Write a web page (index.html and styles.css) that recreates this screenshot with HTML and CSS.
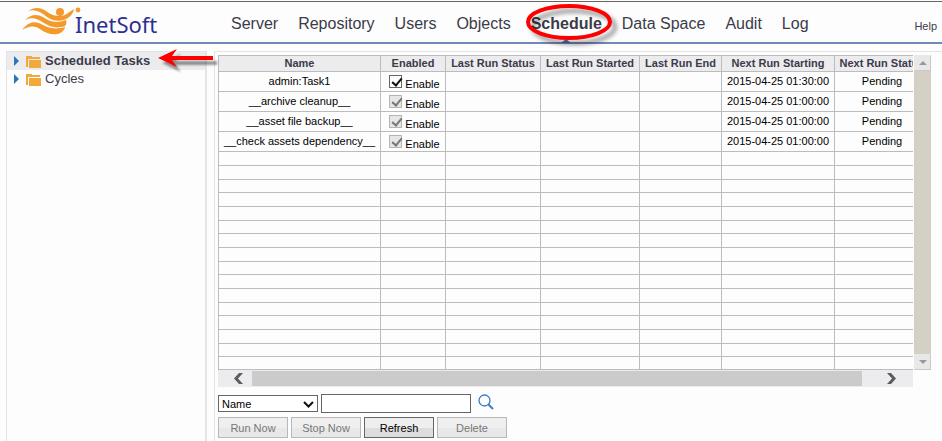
FILE: index.html
```html
<!DOCTYPE html>
<html lang="en">
<head>
<meta charset="utf-8">
<title>InetSoft - Schedule</title>
<link rel="stylesheet" href="styles.css">
</head>
<body>
<header class="top">
  <a class="logo" href="#">
    <svg class="logo-mark" width="60" height="32" viewBox="0 0 60 32" aria-hidden="true">
      <g fill="#f49a2c">
        <path d="M6 5C12 1 18 1 24 5C29 9 33 10 38 10C44 10 48 5 52 3C51 8 48 11 44 13C38 16 30 15 25 11C19 6 13 3 6 5Z"/>
        <path d="M3 14C9 8 15 8 21 11C27 15 33 18 44 14C45 17 44 19 43 20C35 23 28 21 22 17C15 12 9 11 3 14Z"/>
        <path d="M0 24C7 15 13 15 19 18C26 22 33 24 43 21C43 24 39 27 36 28C29 29 23 27 18 23C12 19 7 20 0 24Z"/>
        <circle cx="38" cy="6" r="4"/>
        <circle cx="56" cy="4" r="2.4"/>
      </g>
    </svg>
    <span class="logo-text">InetSoft</span>
  </a>
  <nav class="nav">
    <a href="#">Server</a>
    <a href="#">Repository</a>
    <a href="#">Users</a>
    <a href="#">Objects</a>
    <a href="#" class="active">Schedule
      <svg class="ring" width="96" height="50" viewBox="0 0 96 50" aria-hidden="true">
        <ellipse cx="44" cy="20" rx="41" ry="16" fill="none" stroke="#ff0000" stroke-width="4"/>
      </svg>
    </a>
    <a href="#">Data Space</a>
    <a href="#">Audit</a>
    <a href="#">Log</a>
  </nav>
  <a class="help" href="#">Help</a>
</header>
<div class="body">
  <aside class="side">
    <a class="node selected" href="#">
      <svg class="caret" width="6" height="10" viewBox="0 0 6 10"><path d="M0 0L5 5L0 10Z" fill="#2878b8"/></svg>
      <svg class="folder" width="16" height="13" viewBox="0 0 16 13"><path d="M0 1H6V2H14V4H2V12H0Z" fill="#f2a93b"/><path d="M3 5H15V13H3Z" fill="#f2a93b"/></svg>
      <span>Scheduled Tasks</span>
      <svg class="arrow" width="64" height="28" viewBox="0 0 64 28" aria-hidden="true"><path d="M1 11L20 2L15 9H56V13H15L20 20Z" fill="#ff0000"/></svg>
    </a>
    <a class="node" href="#">
      <svg class="caret" width="6" height="10" viewBox="0 0 6 10"><path d="M0 0L5 5L0 10Z" fill="#2878b8"/></svg>
      <svg class="folder" width="16" height="13" viewBox="0 0 16 13"><path d="M0 1H6V2H14V4H2V12H0Z" fill="#f2a93b"/><path d="M3 5H15V13H3Z" fill="#f2a93b"/></svg>
      <span>Cycles</span>
    </a>
  </aside>
  <main class="main">
    <div class="grid">
      <div class="clip">
        <table class="tasks">
          <colgroup><col class="c1"><col class="c2"><col class="c3"><col class="c4"><col class="c5"><col class="c6"><col class="c7"></colgroup>
          <thead>
            <tr><th>Name</th><th>Enabled</th><th>Last Run Status</th><th>Last Run Started</th><th>Last Run End</th><th>Next Run Starting</th><th>Next Run Status</th></tr>
          </thead>
          <tbody class="filled">
            <tr><td>admin:Task1</td><td><label class="tick"><input type="checkbox" checked><span>Enable</span></label></td><td></td><td></td><td></td><td>2015-04-25 01:30:00</td><td>Pending</td></tr>
            <tr><td>__archive cleanup__</td><td><label class="tick"><input type="checkbox" checked disabled><span>Enable</span></label></td><td></td><td></td><td></td><td>2015-04-25 01:00:00</td><td>Pending</td></tr>
            <tr><td>__asset file backup__</td><td><label class="tick"><input type="checkbox" checked disabled><span>Enable</span></label></td><td></td><td></td><td></td><td>2015-04-25 01:00:00</td><td>Pending</td></tr>
            <tr><td>__check assets dependency__</td><td><label class="tick"><input type="checkbox" checked disabled><span>Enable</span></label></td><td></td><td></td><td></td><td>2015-04-25 01:00:00</td><td>Pending</td></tr>
          </tbody>
          <tbody class="blank">
            <tr><td></td><td></td><td></td><td></td><td></td><td></td><td></td></tr>
            <tr><td></td><td></td><td></td><td></td><td></td><td></td><td></td></tr>
            <tr><td></td><td></td><td></td><td></td><td></td><td></td><td></td></tr>
            <tr><td></td><td></td><td></td><td></td><td></td><td></td><td></td></tr>
            <tr><td></td><td></td><td></td><td></td><td></td><td></td><td></td></tr>
            <tr><td></td><td></td><td></td><td></td><td></td><td></td><td></td></tr>
            <tr><td></td><td></td><td></td><td></td><td></td><td></td><td></td></tr>
            <tr><td></td><td></td><td></td><td></td><td></td><td></td><td></td></tr>
            <tr><td></td><td></td><td></td><td></td><td></td><td></td><td></td></tr>
            <tr><td></td><td></td><td></td><td></td><td></td><td></td><td></td></tr>
            <tr><td></td><td></td><td></td><td></td><td></td><td></td><td></td></tr>
            <tr><td></td><td></td><td></td><td></td><td></td><td></td><td></td></tr>
            <tr><td></td><td></td><td></td><td></td><td></td><td></td><td></td></tr>
            <tr><td></td><td></td><td></td><td></td><td></td><td></td><td></td></tr>
            <tr><td></td><td></td><td></td><td></td><td></td><td></td><td></td></tr>
            <tr><td></td><td></td><td></td><td></td><td></td><td></td><td></td></tr>
          </tbody>
        </table>
      </div>
      <div class="vbar">
        <button type="button" aria-label="Scroll up"><svg width="8" height="4" viewBox="0 0 8 4"><path d="M4 0L8 4H0Z" fill="#999"/></svg></button>
        <button type="button" aria-label="Scroll down"><svg width="8" height="4" viewBox="0 0 8 4"><path d="M0 0H8L4 4Z" fill="#999"/></svg></button>
      </div>
      <div class="hbar">
        <button type="button" aria-label="Scroll left"><svg width="10" height="11" viewBox="0 0 10 11"><path d="M5 0H9L4 5.5L9 11H5L0 5.5Z" fill="#5c5c5c"/></svg></button>
        <div class="thumb"></div>
        <button type="button" class="right" aria-label="Scroll right"><svg width="10" height="11" viewBox="0 0 10 11"><path d="M1 0H5L10 5.5L5 11H1L6 5.5Z" fill="#5c5c5c"/></svg></button>
      </div>
    </div>
    <form class="search">
      <div class="pick">
        <select aria-label="Search by"><option>Name</option></select>
        <svg width="11" height="7" viewBox="0 0 11 7" aria-hidden="true"><path d="M1 1L5.5 5.5L10 1" fill="none" stroke="#111" stroke-width="2"/></svg>
      </div>
      <input type="text" aria-label="Search text">
      <button type="button" class="find" aria-label="Search"><svg width="16" height="16" viewBox="0 0 16 16"><circle cx="6.5" cy="6.5" r="5.5" fill="none" stroke="#3b7bbf" stroke-width="1.3"/><path d="M10.5 10.5L15 15" stroke="#3b7bbf" stroke-width="2"/></svg></button>
    </form>
    <div class="actions">
      <button type="button" disabled>Run Now</button>
      <button type="button" disabled>Stop Now</button>
      <button type="button">Refresh</button>
      <button type="button" disabled>Delete</button>
    </div>
  </main>
</div>
</body>
</html>
```
FILE: styles.css
```css
* { box-sizing: border-box; }

body {
  margin: 0;
  min-height: 100vh;
  display: flex;
  flex-direction: column;
  padding-top: 1px;
  background: #fdfdfd;
  color: #000;
  font: 11px/14px "Liberation Sans", Arial, sans-serif;
}

a { color: #3b3b49; text-decoration: none; }
button { padding: 0; font: inherit; }
svg { display: block; flex: none; }

.top {
  display: flex;
  align-items: center;
  height: 43px;
  padding: 0 5px 0 22px;
  border-top: 1px solid #666;
  border-bottom: 2px solid #7488b8;
}

.logo { display: flex; width: 209px; height: 32px; }
.logo-text {
  margin-left: -7px;
  color: #2d308f;
  font: 22px/36px "Noto Sans", "Open Sans", sans-serif;
}

.nav { display: flex; gap: 20px; font-size: 16px; line-height: 18px; white-space: nowrap; padding-top: 3px; }
.active { position: relative; font-weight: bold; }
.active::after {
  content: "";
  position: absolute;
  left: 30px;
  top: 24px;
  border: 5px solid transparent;
  border-top: 0;
  border-bottom: 4px solid #4f6ea8;
}
.ring { position: absolute; left: -6px; top: -13px; z-index: 1; filter: drop-shadow(5px 5px 2px rgba(0, 0, 0, .4)); }
.help { margin-left: auto; padding-top: 8px; }

.body { flex: 1; display: flex; gap: 7px; padding: 7px 0 0 6px; }

.side { width: 201px; border: 1px solid #e4e4e4; border-right-width: 2px; border-bottom: 0; }
.node {
  position: relative;
  display: flex;
  align-items: center;
  height: 18px;
  padding-left: 7px;
  font-size: 13px;
}
.caret { margin-right: 6px; }
.folder { margin-right: 3px; }
.selected { background: #ececee; font-weight: bold; }
.arrow { position: absolute; left: 150px; top: -5px; z-index: 1; filter: drop-shadow(4px 5px 1px rgba(0, 0, 0, .4)); }

.main { flex: 1; min-width: 0; padding: 3px 11px 0 3px; border: 1px solid #e4e4e4; border-width: 1px 0 0 1px; }

.grid { display: grid; grid-template-columns: minmax(0, 1fr) 17px; column-gap: 1px; }
.clip { overflow: hidden; }
.tasks { width: 712px; border-collapse: collapse; table-layout: fixed; line-height: 12px; }
.c1 { width: 162px; }
.c2 { width: 65px; }
.c3 { width: 95px; }
.c4 { width: 99px; }
.c5 { width: 82px; }
.c6 { width: 113px; }
.c7 { width: 95px; }
.tasks th, .tasks td { padding: 0 0 1px; border: 1px solid #bcbcbc; text-align: center; white-space: nowrap; }
.tasks th { height: 16px; background: #ececee; color: #3b3b49; }
.filled td { height: 20px; }
.blank td { height: 14px; }
.blank tr:nth-child(3n) td, .blank tr:last-child td { height: 13px; }

.tick { display: flex; justify-content: center; gap: 3px; height: 18px; padding-left: 3px; }
.tick span { padding-top: 6px; }
.tick input {
  appearance: none;
  width: 13px;
  height: 13px;
  margin: 3px 0 0;
  border: 1px solid #666;
  position: relative;
}
.tick input::after {
  content: "";
  position: absolute;
  left: 4px;
  top: 0;
  width: 4px;
  height: 8px;
  border: solid #111;
  border-width: 0 2px 2px 0;
  transform: rotate(40deg);
}
.tick input:disabled { border-color: #b4b4b4; background: #e6e6e6; }
.tick input:disabled::after { border-color: #777; }

.vbar { display: flex; flex-direction: column; justify-content: space-between; background: #d4d0c4; }
.vbar button {
  display: flex;
  align-items: center;
  justify-content: center;
  height: 16px;
  border: 1px solid #e8e8e8;
  border-right-color: #c8c8c8;
  border-bottom-color: #c8c8c8;
  background: #e8e8e8;
}
.hbar { display: flex; align-items: center; height: 17px; background: #ececee; }
.hbar button { width: 34px; height: 17px; padding-left: 16px; border: 0; background: none; }
.hbar .right { width: 51px; padding-left: 24px; }
.thumb { flex: 1; height: 15px; background: #cbcbcb; }

.search { display: flex; align-items: center; gap: 3px; margin-top: 7px; }
.pick { position: relative; width: 100px; height: 17px; }
.pick select {
  appearance: none;
  width: 100%;
  height: 100%;
  padding: 0 3px;
  border: 1px solid #666;
  border-radius: 0;
  background: #fff;
  color: #000;
  font: inherit;
}
.pick svg { position: absolute; right: 4px; top: 6px; pointer-events: none; }
.search input { width: 150px; height: 19px; border: 1px solid #666; background: #fff; }
.find { margin: -4px 0 0 4px; border: 0; background: none; }

.actions { display: flex; gap: 3px; margin-top: 4px; }
.actions button {
  width: 70px;
  height: 21px;
  border: 1px solid #666;
  background: linear-gradient(#eee 50%, #ddd 50%);
  color: #000;
}
.actions button:disabled { border-color: #b8b8b8; background: linear-gradient(#efefef 50%, #e8e8e8 50%); color: #777; }
```
